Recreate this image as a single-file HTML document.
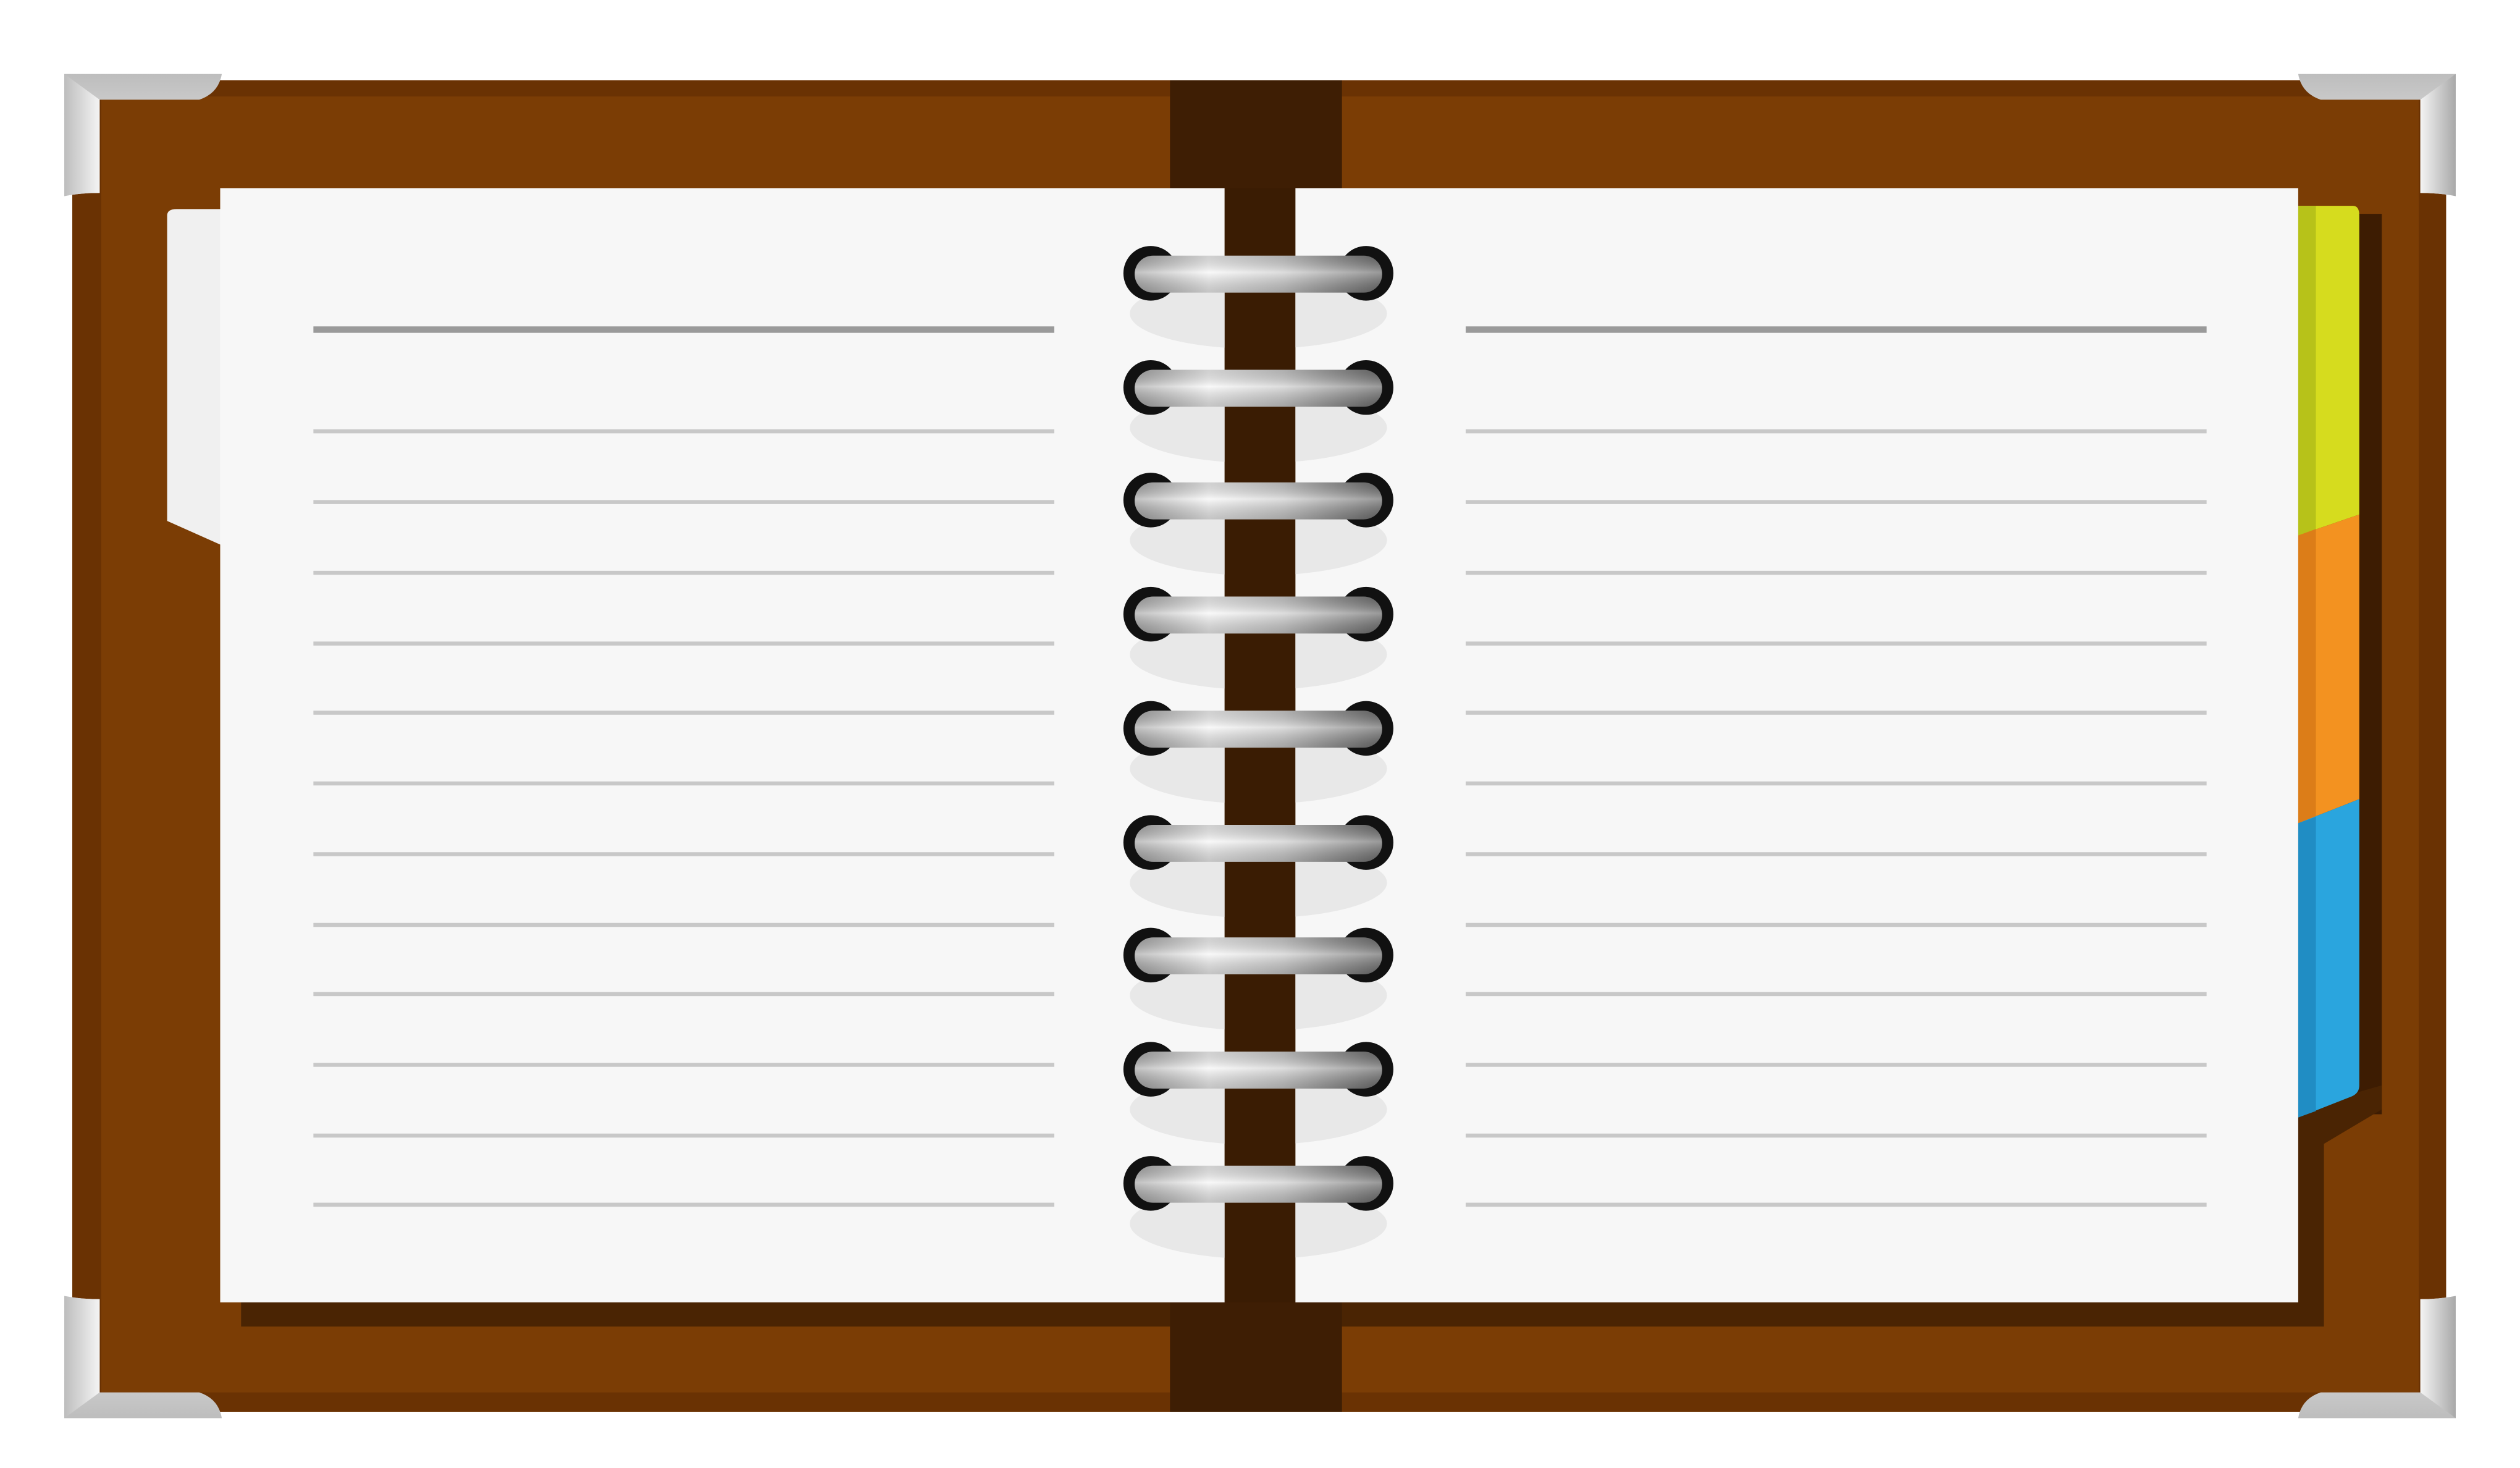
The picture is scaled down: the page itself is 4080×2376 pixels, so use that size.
<!DOCTYPE html>
<html><head><meta charset="utf-8"><style>html,body{margin:0;padding:0;background:#fff;overflow:hidden}svg{display:block}</style></head>
<body>
<svg width="4080" height="2376" viewBox="0 0 1568 913" preserveAspectRatio="none" xmlns="http://www.w3.org/2000/svg">
<defs>
<linearGradient id="ring" x1="0" y1="0" x2="1" y2="0">
<stop offset="0" stop-color="#a8a8a8"/><stop offset="0.3" stop-color="#f6f6f6"/><stop offset="0.6" stop-color="#cfcfcf"/><stop offset="1" stop-color="#6e6e6e"/></linearGradient>
<linearGradient id="ringv" x1="0" y1="0" x2="0" y2="1">
<stop offset="0" stop-color="#000" stop-opacity="0.15"/><stop offset="0.45" stop-color="#fff" stop-opacity="0.3"/><stop offset="1" stop-color="#000" stop-opacity="0.2"/></linearGradient>
<linearGradient id="silH" x1="0" y1="0" x2="0" y2="1"><stop offset="0" stop-color="#bdbdbd"/><stop offset="1" stop-color="#f4f4f4"/></linearGradient>
<linearGradient id="silV" x1="0" y1="0" x2="1" y2="0"><stop offset="0" stop-color="#bdbdbd"/><stop offset="1" stop-color="#f4f4f4"/></linearGradient>
<linearGradient id="silH2" x1="0" y1="1" x2="0" y2="0"><stop offset="0" stop-color="#bdbdbd"/><stop offset="1" stop-color="#f4f4f4"/></linearGradient>
<linearGradient id="silV2" x1="1" y1="0" x2="0" y2="0"><stop offset="0" stop-color="#a8a8a8"/><stop offset="1" stop-color="#f4f4f4"/></linearGradient>
</defs>
<rect width="1568" height="913" fill="#fff"/>
<rect x="45" y="50" width="1477" height="828" fill="#7b3d05"/>
<rect x="45" y="50" width="1477" height="10" fill="#6a3203"/>
<rect x="45" y="50" width="18" height="828" fill="#6a3203"/>
<rect x="1505" y="50" width="17" height="828" fill="#6a3203"/>
<rect x="45" y="866" width="1477" height="12" fill="#6a3203"/>
<rect x="150" y="130" width="612" height="695" fill="#4a2403"/>
<rect x="806" y="130" width="640" height="695" fill="#4a2403"/>
<rect x="1440" y="133" width="42" height="560" fill="#3d1c02"/>
<polygon points="1430,690 1482,675 1482,690 1445,712 1445,825 1430,825" fill="#4a2403"/>
<rect x="728" y="50" width="107" height="828" fill="#3e1e04"/>
<path d="M104,134 Q104,130 110,130 L140,130 L140,340 L104,324 Z" fill="#f0f0f0"/>
<path d="M1430,128 L1464,128 Q1468,128 1468,134 L1468,320 L1430,333 Z" fill="#d6dc1e"/>
<path d="M1430,128 L1441,128 L1441,330 L1430,333 Z" fill="#b7c219"/>
<path d="M1430,333 L1468,320 L1468,497 L1430,512 Z" fill="#f39220"/>
<path d="M1430,333 L1441,329 L1441,508 L1430,512 Z" fill="#dc7d18"/>
<path d="M1430,512 L1468,497 L1468,675 Q1468,680 1463,682 L1430,695 Z" fill="#2aa5de"/>
<path d="M1430,512 L1441,508 L1441,691 L1430,695 Z" fill="#208dc4"/>
<rect x="137" y="117" width="625" height="693" fill="#f7f7f7"/>
<rect x="806" y="117" width="624" height="693" fill="#f7f7f7"/>
<g fill="#9a9a9a">
<rect x="195" y="203" width="461" height="4"/>
<rect x="912" y="203" width="461" height="4"/>
</g>
<g fill="#c8c8c8">
<rect x="195" y="267" width="461" height="2.5"/><rect x="912" y="267" width="461" height="2.5"/>
<rect x="195" y="311" width="461" height="2.5"/><rect x="912" y="311" width="461" height="2.5"/>
<rect x="195" y="355" width="461" height="2.5"/><rect x="912" y="355" width="461" height="2.5"/>
<rect x="195" y="399" width="461" height="2.5"/><rect x="912" y="399" width="461" height="2.5"/>
<rect x="195" y="442" width="461" height="2.5"/><rect x="912" y="442" width="461" height="2.5"/>
<rect x="195" y="486" width="461" height="2.5"/><rect x="912" y="486" width="461" height="2.5"/>
<rect x="195" y="530" width="461" height="2.5"/><rect x="912" y="530" width="461" height="2.5"/>
<rect x="195" y="574" width="461" height="2.5"/><rect x="912" y="574" width="461" height="2.5"/>
<rect x="195" y="617" width="461" height="2.5"/><rect x="912" y="617" width="461" height="2.5"/>
<rect x="195" y="661" width="461" height="2.5"/><rect x="912" y="661" width="461" height="2.5"/>
<rect x="195" y="705" width="461" height="2.5"/><rect x="912" y="705" width="461" height="2.5"/>
<rect x="195" y="748" width="461" height="2.5"/><rect x="912" y="748" width="461" height="2.5"/>
</g>
<!-- ring shadows -->
<g id="sh"><ellipse cx="783" cy="195" rx="80" ry="22" fill="#e8e8e8"/></g>
<use href="#sh" y="71"/><use href="#sh" y="141"/><use href="#sh" y="212"/><use href="#sh" y="283"/><use href="#sh" y="354"/><use href="#sh" y="424"/><use href="#sh" y="495"/><use href="#sh" y="566"/>
<rect x="762" y="117" width="44" height="693" fill="#3a1c03"/>
<g id="r">
<circle cx="716" cy="170" r="17" fill="#111"/>
<circle cx="850" cy="170" r="17" fill="#111"/>
<rect x="706" y="159" width="154" height="23" rx="11.5" fill="url(#ring)"/>
<rect x="706" y="159" width="154" height="23" rx="11.5" fill="url(#ringv)"/>
</g>
<use href="#r" y="71"/><use href="#r" y="141"/><use href="#r" y="212"/><use href="#r" y="283"/><use href="#r" y="354"/><use href="#r" y="424"/><use href="#r" y="495"/><use href="#r" y="566"/>
<g>
<path d="M40,46 L138,46 Q136,58 124,62 L62,62 L62,120 Q50,120 40,122 Z" fill="url(#silH)"/>
<path d="M40,46 L62,62 L62,120 Q50,120 40,122 Z" fill="url(#silV)"/>
<path d="M1528,46 L1430,46 Q1432,58 1444,62 L1506,62 L1506,120 Q1518,120 1528,122 Z" fill="url(#silH)"/>
<path d="M1528,46 L1506,62 L1506,120 Q1518,120 1528,122 Z" fill="url(#silV2)"/>
<path d="M40,882 L138,882 Q136,870 124,866 L62,866 L62,808 Q50,808 40,806 Z" fill="url(#silH2)"/>
<path d="M40,882 L62,866 L62,808 Q50,808 40,806 Z" fill="url(#silV)"/>
<path d="M1528,882 L1430,882 Q1432,870 1444,866 L1506,866 L1506,808 Q1518,808 1528,806 Z" fill="url(#silH2)"/>
<path d="M1528,882 L1506,866 L1506,808 Q1518,808 1528,806 Z" fill="url(#silV2)"/>
</g>
</svg>
</body></html>
